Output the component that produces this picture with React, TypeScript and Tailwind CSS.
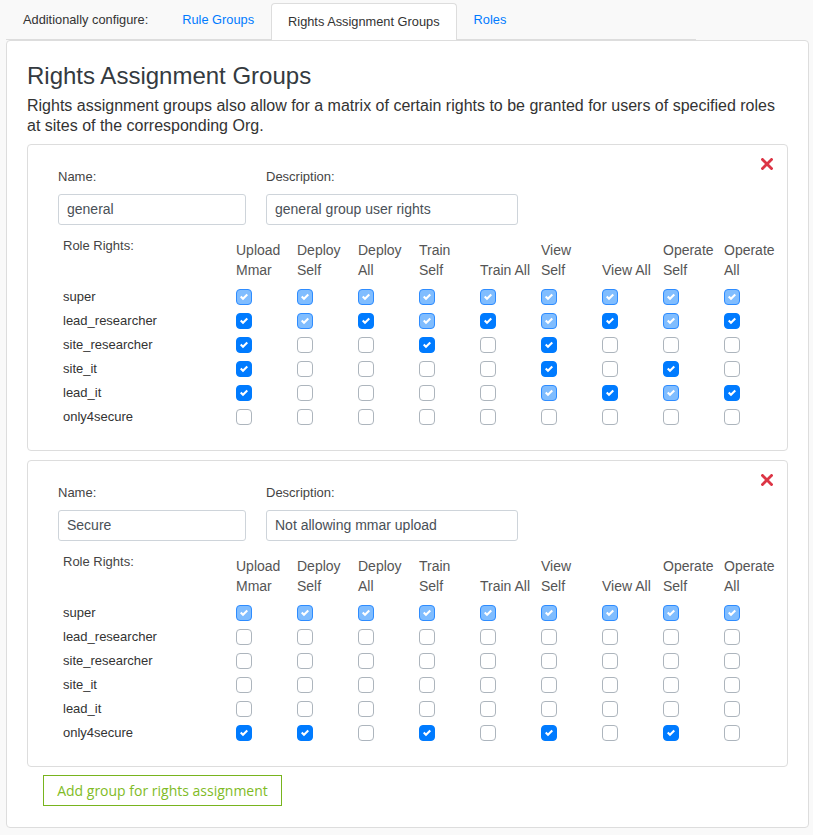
import React from "react";

type St = "L" | "S" | "U";

const COLS: [string, string][] = [
  ["Upload", "Mmar"],
  ["Deploy", "Self"],
  ["Deploy", "All"],
  ["Train", "Self"],
  ["", "Train All"],
  ["View", "Self"],
  ["", "View All"],
  ["Operate", "Self"],
  ["Operate", "All"],
];

const ROLES = ["super", "lead_researcher", "site_researcher", "site_it", "lead_it", "only4secure"];

const G1: string[] = [
  "LLLLLLLLL",
  "SLSLSLSLS",
  "SUUSUSUUU",
  "SUUUUSUSU",
  "SUUUULSLS",
  "UUUUUUUUU",
];

const G2: string[] = [
  "LLLLLLLLL",
  "UUUUUUUUU",
  "UUUUUUUUU",
  "UUUUUUUUU",
  "UUUUUUUUU",
  "SSUSUSUSU",
];

function Check({ s }: { s: St }) {
  if (s === "U") {
    return <div className="w-[16px] h-[16px] rounded-[4px] border border-[#adb5bd] bg-white" />;
  }
  const cls =
    s === "L"
      ? "w-[16px] h-[16px] rounded-[4px] border border-[#2e8cff] bg-[#80bdff] flex items-center justify-center"
      : "w-[16px] h-[16px] rounded-[4px] border border-[#007bff] bg-[#007bff] flex items-center justify-center";
  return (
    <div className={cls}>
      <svg width="8" height="8" viewBox="0 0 8 8">
        <path fill="#fff" d="M6.564.75l-3.59 3.612-1.538-1.55L0 4.26 2.974 7.25 8 2.193z" />
      </svg>
    </div>
  );
}

function Group({ name, desc, m }: { name: string; desc: string; m: string[] }) {
  return (
    <div className="relative border border-[#dddddd] rounded-[4px] bg-white pl-[30px] pt-[24px] pb-[21px]">
      <div className="absolute right-[14px] top-[13px]">
        <svg width="12" height="12" viewBox="0 0 12 12">
          <path d="M1.5 1.5 L10.5 10.5 M10.5 1.5 L1.5 10.5" stroke="#dc3545" strokeWidth="2.8" strokeLinecap="square" />
        </svg>
      </div>
      <div className="flex gap-[20px]">
        <div className="flex flex-col w-[188px]">
          <div className="text-[13px] leading-[16px] text-[#444]">Name:</div>
          <div className="mt-[9px] h-[31px] border border-[#ced4da] rounded-[3px] px-[8px] flex items-center text-[14px] text-[#495057]">
            {name}
          </div>
        </div>
        <div className="flex flex-col w-[252px]">
          <div className="text-[13px] leading-[16px] text-[#444]">Description:</div>
          <div className="mt-[9px] h-[31px] border border-[#ced4da] rounded-[3px] px-[8px] flex items-center text-[14px] text-[#495057]">
            {desc}
          </div>
        </div>
      </div>
      <div className="mt-[15px] grid grid-cols-[178px_repeat(9,61px)]">
        <div className="pl-[5px] text-[13px] leading-[12px] text-[#444]">Role Rights:</div>
        {COLS.map((c, i) => (
          <div key={i} className="h-[40px] flex flex-col justify-end text-[14px] leading-[20px] text-[#555]">
            {c[0] && <div>{c[0]}</div>}
            <div>{c[1]}</div>
          </div>
        ))}
      </div>
      <div className="mt-[5px] grid grid-cols-[178px_repeat(9,61px)]">
        {ROLES.map((r, ri) => (
          <React.Fragment key={r}>
            <div className="h-[24px] pl-[5px] flex items-center text-[13px] text-[#333]">{r}</div>
            {m[ri].split("").map((s, ci) => (
              <div key={ci} className="h-[24px] flex items-center">
                <Check s={s as St} />
              </div>
            ))}
          </React.Fragment>
        ))}
      </div>
    </div>
  );
}

export default function App() {
  return (
    <div className="min-h-[835px] bg-[#f9f9f9] font-['Liberation_Sans',Arial,sans-serif] text-[#333]">
      <div className="ml-[6px] w-[690px] h-[40px] flex items-stretch border-b border-[#dddddd] text-[12.8px]">
        <div className="px-[17px] pt-[1px] flex items-center text-[#333]">Additionally configure:</div>
        <div className="px-[17px] pt-[1px] flex items-center text-[#007bff]">Rule Groups</div>
        <div className="mt-[3px] -mb-px px-[16px] flex items-center bg-white border border-b-0 border-[#dddddd] rounded-t-[4px] text-[#333]">
          Rights Assignment Groups
        </div>
        <div className="px-[17px] pt-[1px] flex items-center text-[#007bff]">Roles</div>
      </div>
      <div className="ml-[6px] w-[803px] bg-white border border-[#dddddd] rounded-[4px] px-[20px] pt-[20px] pb-[21px]">
        <h2 className="text-[24px] leading-[29px] text-[#343a40]">Rights Assignment Groups</h2>
        <p className="mt-[6px] text-[16px] leading-[20px] text-[#333]">
          Rights assignment groups also allow for a matrix of certain rights to be granted for users of specified roles at sites of the corresponding Org.
        </p>
        <div className="mt-[8px]">
          <Group name="general" desc="general group user rights" m={G1} />
        </div>
        <div className="mt-[9px]">
          <Group name="Secure" desc="Not allowing mmar upload" m={G2} />
        </div>
        <div className="mt-[8px] ml-[16px]">
          <div className="inline-flex items-center h-[31px] w-[239px] justify-center border border-[#78b41e] text-[#7fbb26] text-[14px] font-['Open_Sans',sans-serif]">
            Add group for rights assignment
          </div>
        </div>
      </div>
    </div>
  );
}
